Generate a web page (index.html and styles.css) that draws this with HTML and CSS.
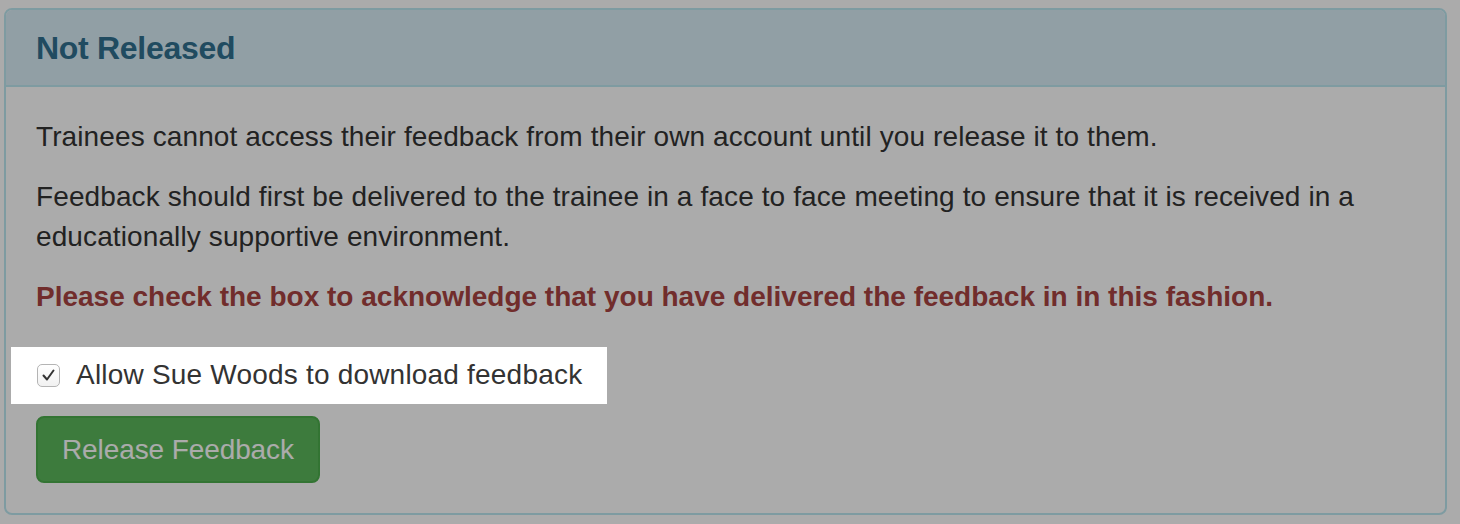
FILE: index.html
```html
<!DOCTYPE html>
<html>
<head>
    <title>Feedback</title>
    <meta name="viewport" content="width=device-width, initial-scale=1.0">
    <link rel="stylesheet" href="styles.css">
</head>
<body>
    <div class="page">
        <div class="panel">
            <div class="panel-heading">
                <h3 class="panel-title">Not Released</h3>
            </div>
            <div class="panel-body">
                <p>Trainees cannot access their feedback from their own account until you release it to them.</p>
                <p>Feedback should first be delivered to the trainee in a face to face meeting to ensure that it is received in a educationally supportive environment.</p>
                <p class="text-danger">Please check the box to acknowledge that you have delivered the feedback in in this fashion.</p>

                <!-- tour step: highlighted above the backdrop -->
                <label class="tour-highlight">
                    <span class="check-box">
                        <svg width="23" height="23" viewBox="0 0 23 23">
                            <path d="M6.5 11.5 L10 15.5 L16.5 6.5" fill="none" stroke="#333" stroke-width="2" stroke-linecap="round" stroke-linejoin="round"/>
                        </svg>
                    </span>
                    Allow Sue Woods to download feedback
                </label>

                <button class="btn-success">Release Feedback</button>
            </div>
        </div>
    </div>

    <div class="tour-backdrop"></div>
</body>
</html>
```

FILE: styles.css
```css
* {
    margin: 0;
    padding: 0;
    box-sizing: border-box;
    font-family: 'Liberation Sans', Arial, sans-serif;
}

body {
    background: #fff;
    color: #333;
}

.page {
    padding: 8px 13px 9px 4px;
}

.panel {
    border: 2px solid #bce8f1;
    border-radius: 8px;
    background: #fff;
}

.panel-heading {
    background: #d9edf7;
    border-bottom: 2px solid #bce8f1;
    border-radius: 6px 6px 0 0;
    padding: 21px 30px 19px;
}

.panel-title {
    color: #31708f;
    font-size: 32px;
    line-height: 35px;
    font-weight: 700;
    letter-spacing: -0.3px;
}

.panel-body {
    padding: 30px;
}

.panel-body p {
    font-size: 28px;
    line-height: 40px;
    margin-bottom: 20px;
    letter-spacing: 0.11px;
}

.panel-body p.text-danger {
    color: #a94442;
    font-weight: 700;
    margin-bottom: 30px;
    letter-spacing: 0;
}

.tour-highlight {
    position: relative;
    z-index: 11;
    display: flex;
    align-items: center;
    width: fit-content;
    margin-left: -25px;
    margin-bottom: 12px;
    padding: 8px 25px 9px 26px;
    background: #fff;
    font-size: 28px;
    line-height: 40px;
    letter-spacing: 0.2px;
    color: #333;
}

.check-box {
    display: inline-flex;
    width: 23px;
    height: 23px;
    margin-right: 16px;
    border: 1px solid #b4b4b4;
    border-radius: 5px;
    background: linear-gradient(#fff, #f1f1f1);
}

.check-box svg {
    margin: -1px;
}

.btn-success {
    display: block;
    background: #5cb85c;
    border: 2px solid #4cae4c;
    border-radius: 8px;
    color: #fff;
    font-size: 28px;
    line-height: 39px;
    padding: 12px 24px;
    letter-spacing: -0.1px;
    cursor: pointer;
}

.tour-backdrop {
    position: fixed;
    top: 0;
    left: 0;
    right: 0;
    bottom: 0;
    z-index: 10;
    background: rgba(0, 0, 0, 0.33);
}
```
